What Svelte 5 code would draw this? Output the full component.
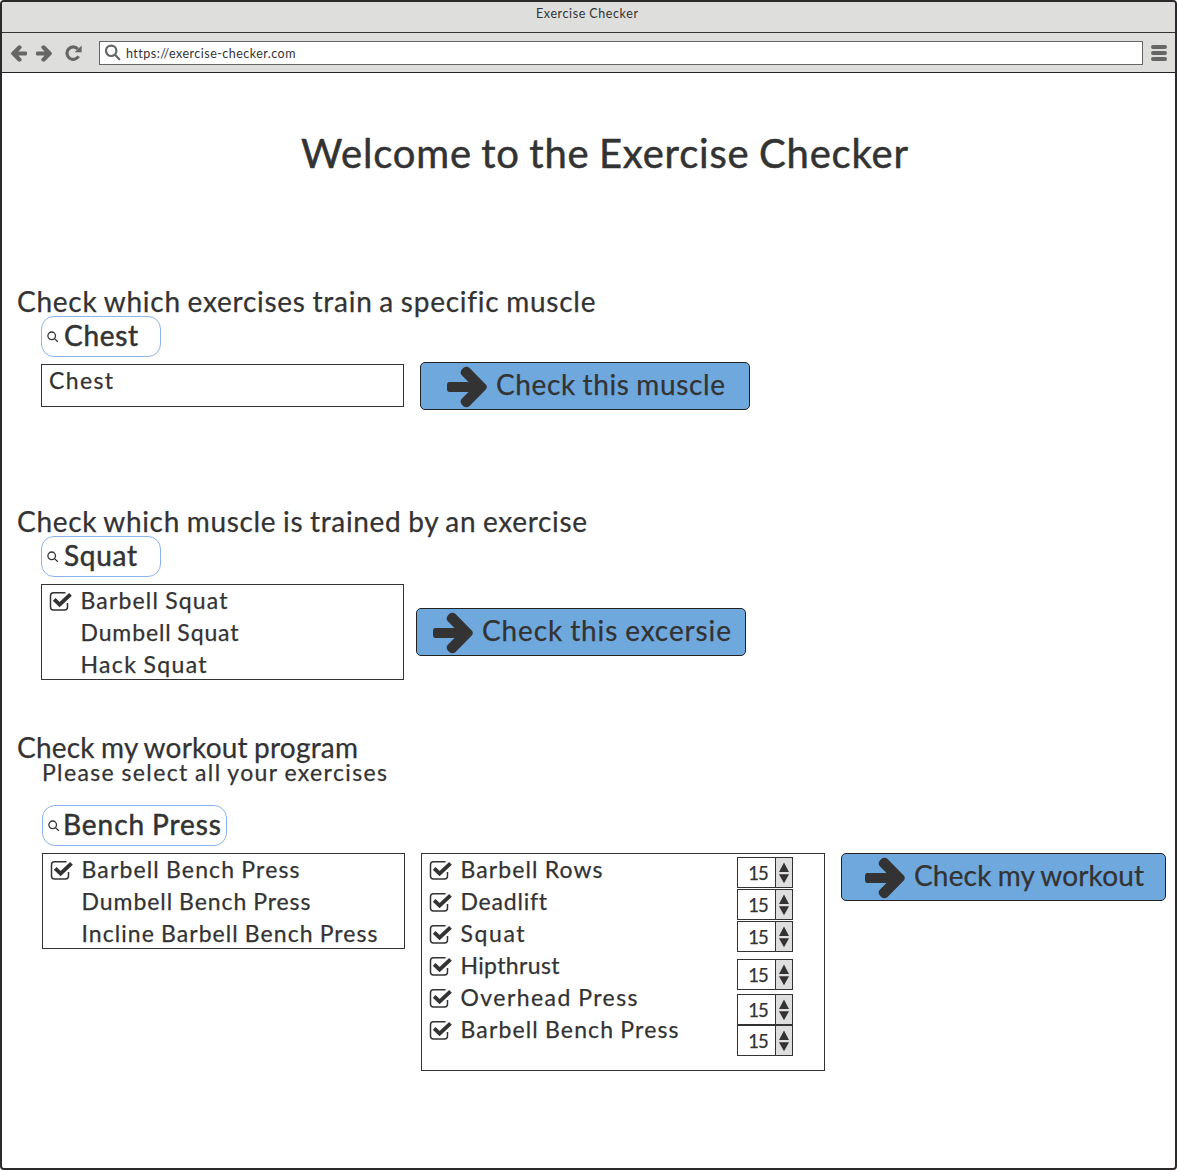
<script>
  const muscles = [{ name: 'Chest', width: 64 }];
  const squats = [
    { name: 'Barbell Squat', width: 147, checked: true },
    { name: 'Dumbell Squat', width: 158 },
    { name: 'Hack Squat', width: 126 }
  ];
  const presses = [
    { name: 'Barbell Bench Press', width: 218, checked: true },
    { name: 'Dumbell Bench Press', width: 229 },
    { name: 'Incline Barbell Bench Press', width: 296 }
  ];
  const workout = [
    { name: 'Barbell Rows', width: 142, checked: true },
    { name: 'Deadlift', width: 86, checked: true },
    { name: 'Squat', width: 64, checked: true },
    { name: 'Hipthrust', width: 99, checked: true },
    { name: 'Overhead Press', width: 177, checked: true },
    { name: 'Barbell Bench Press', width: 218, checked: true }
  ];
  const reps = [15, 15, 15, 15, 15, 15];

  // Spreads the letters of a label so that it spans the given width.
  function fit(node, width) {
    const gaps = node.textContent.length - 1;
    const natural = node.getBoundingClientRect().width;
    node.style.letterSpacing = `${(width - natural) / gaps}px`;
  }
</script>

{#snippet label(text, width)}<span class="label" use:fit={width}>{text}</span>{/snippet}

{#snippet pill(text, width)}
  <div class="pill">
    <svg class="lens" viewBox="0 0 12 12"><circle cx="4.7" cy="4.8" r="3.8" /><path d="M7.5 7.6 10.8 10.8" /></svg>
    {@render label(text, width)}
  </div>
{/snippet}

{#snippet rows(items, indented)}
  {#each items as item}
    <div class="row">
      {#if indented}
        <span class="tick">
          {#if item.checked}
            <svg viewBox="0 0 24 24">
              <path class="frame" d="M16.5 2.8H4.5Q1.5 2.8 1.5 5.8V17Q1.5 20 4.5 20H15.5Q18.5 20 18.5 17V13" />
              <path class="mark" d="M5.2 9.4 10.6 14.6 21.5 4.4" />
            </svg>
          {/if}
        </span>
      {/if}
      {@render label(item.name, item.width)}
    </div>
  {/each}
{/snippet}

{#snippet action(text, width, kind)}
  <button class="action {kind}">
    <svg class="arrow" viewBox="0 0 40 42">
      <path d="M2.5 16H21.5L14.8 9.2Q12.5 6.5 14.8 3.6L16.5 1.8Q19.5-.5 22.3 1.8L39 18.8Q40.6 21 39 23.2L22.3 40.2Q19.5 42.5 16.5 40.2L14.8 38.4Q12.5 35.5 14.8 32.8L21.5 26H2.5Q0 26 0 23V19Q0 16 2.5 16Z" />
    </svg>
    {@render label(text, width)}
  </button>
{/snippet}

<div class="window">
  <header class="titlebar">{@render label('Exercise Checker', 102)}</header>
  <nav class="toolbar">
    <svg class="nav back" viewBox="0 0 40 42"><path d="M3 16H21.5L14 8Q12 5.5 14.3 3L16 1.5Q19.5-.5 22.3 1.8L39 18.8Q40.6 21 39 23.2L22.3 40.2Q19.5 42.5 16 40.5L14.3 39Q12 36.5 14 34L21.5 26H3Q0 26 0 23V19Q0 16 3 16Z" /></svg>
    <svg class="nav forward" viewBox="0 0 40 42"><path d="M3 16H21.5L14 8Q12 5.5 14.3 3L16 1.5Q19.5-.5 22.3 1.8L39 18.8Q40.6 21 39 23.2L22.3 40.2Q19.5 42.5 16 40.5L14.3 39Q12 36.5 14 34L21.5 26H3Q0 26 0 23V19Q0 16 3 16Z" /></svg>
    <svg class="nav reload" viewBox="0 0 17 16"><path class="arc" d="M12.8 4A6.2 6.2 0 1 0 13.6 11.2" /><path d="M16.6.6V7.2H9.6Z" /></svg>
    <div class="address">
      <svg viewBox="0 0 17 17"><circle cx="6.2" cy="6.8" r="5.2" /><path d="M10.3 11 14.3 15.2" /></svg>
      {@render label('https://exercise-checker.com', 169)}
    </div>
    <svg class="menu" viewBox="0 0 16 16"><path d="M2 2H14M2 8H14M2 14H14" /></svg>
  </nav>

  <main>
    <h1>{@render label('Welcome to the Exercise Checker', 607)}</h1>

    <section class="by-muscle">
      <h2>{@render label('Check which exercises train a specific muscle', 578)}</h2>
      <div class="body">
        {@render pill('Chest', 74)}
        <div class="columns">
          <div class="list short">{@render rows(muscles, false)}</div>
          {@render action('Check this muscle', 229, 'muscle')}
        </div>
      </div>
    </section>

    <section class="by-exercise">
      <h2>{@render label('Check which muscle is trained by an exercise', 570)}</h2>
      <div class="body">
        {@render pill('Squat', 73)}
        <div class="columns">
          <div class="list">{@render rows(squats, true)}</div>
          {@render action('Check this excersie', 249, 'exercise')}
        </div>
      </div>
    </section>

    <section class="by-program">
      <h2>{@render label('Check my workout program', 341)}</h2>
      <div class="body">
        <p>{@render label('Please select all your exercises', 345)}</p>
        {@render pill('Bench Press', 158)}
        <div class="columns">
          <div class="list">{@render rows(presses, true)}</div>
          <div class="list program">
            <div>{@render rows(workout, true)}</div>
            <div class="steppers">
              {#each reps as count}
                <div class="stepper">
                  <span class="count">{count}</span>
                  <svg viewBox="0 0 16 29"><path d="M8 4.6 13 14H3ZM8 25.2 13 16.2H3Z" /></svg>
                </div>
              {/each}
            </div>
          </div>
          {@render action('Check my workout', 230, 'workout')}
        </div>
      </div>
    </section>
  </main>
</div>

<style>
  :global(body) { background: #fff; }
  .window {
    box-sizing: border-box;
    width: 1177px;
    height: 1170px;
    overflow: hidden;
    border: 2px solid #2b292a;
    border-radius: 4px;
    background: #fff;
    color: #333;
    font-family: Lato, "Open Sans", sans-serif;
  }
  h1, h2, p { margin: 0; font-weight: 400; }
  svg { display: block; flex: none; fill: #333; }
  .label { display: inline-block; flex: none; white-space: pre; word-spacing: -0.04em; }

  .titlebar {
    box-sizing: border-box;
    height: 31px;
    padding-left: 534px;
    border-bottom: 1px solid #333;
    background: #dededc;
    font-size: 12.5px;
    line-height: 24px;
  }
  .toolbar {
    box-sizing: border-box;
    display: flex;
    align-items: center;
    height: 40px;
    padding: 0 8px 0 9px;
    border-bottom: 1px solid #222;
    background: #dededc;
  }
  .toolbar svg { fill: #666; }
  .nav { width: 16px; height: 17px; margin-top: 1px; }
  .back { transform: scaleX(-1); }
  .forward { margin-left: 9px; }
  .reload { width: 17px; height: 16px; margin-left: 13px; }
  .reload .arc { fill: none; stroke: #666; stroke-width: 3.2; }
  .address {
    box-sizing: border-box;
    display: flex;
    align-items: center;
    width: 1044px;
    height: 24px;
    margin-left: 17px;
    padding-left: 5px;
    border: 1px solid #666;
    background: #fff;
    font-size: 12.5px;
  }
  .address .label { padding-top: 2px; }
  .address svg { width: 17px; height: 17px; margin-right: 4px; stroke: #666; stroke-width: 2.2; stroke-linecap: round; }
  .toolbar .address svg { fill: none; }
  .menu { width: 16px; height: 16px; margin-left: 8px; }
  .menu path { stroke: #666; stroke-width: 4; stroke-linecap: round; }

  main { padding-left: 15px; -webkit-text-stroke: 0.25px #333; }
  h1 {
    height: 40px;
    padding: 60px 0 0 284px;
    font-size: 40px;
    line-height: 40px;
    -webkit-text-stroke: 0.5px #333;
  }
  h2 { height: 30px; font-size: 28px; line-height: 32px; }
  .by-muscle { margin-top: 112px; }
  .by-exercise { margin-top: 95px; }
  .by-program { margin-top: 51px; }
  .body { padding: 1px 0 0 24px; }
  .by-program .body { padding: 0 0 0 25px; }
  p { height: 44px; font-size: 23px; line-height: 23px; }

  .pill {
    box-sizing: border-box;
    display: flex;
    width: 120px;
    height: 41px;
    padding-left: 5px;
    border: 1px solid #8ab4ee;
    border-radius: 13px;
    font-size: 28px;
    line-height: 37px;
    -webkit-text-stroke: 0.5px #333;
  }
  .by-program .pill { width: 185px; }
  .lens { width: 12px; height: 12px; margin: 14px 5px 0 0; }
  .by-program .lens { margin-right: 3px; }
  .lens circle, .lens path { fill: none; stroke: #333; stroke-width: 1.3; }

  .columns { display: flex; align-items: flex-start; margin-top: 7px; }
  .list {
    flex: none;
    width: 363px;
    box-shadow: inset 0 0 0 1px #333;
    font-size: 23px;
  }
  .short { height: 43px; }
  .row { display: flex; height: 32px; padding-left: 8px; line-height: 32px; }
  .tick { width: 31.5px; }
  .tick svg { width: 24px; height: 24px; margin-top: 6px; }
  .tick .frame { fill: none; stroke: #333; stroke-width: 1.5; }
  .tick .mark { fill: none; stroke: #333; stroke-width: 4; }

  .program { display: flex; justify-content: space-between; width: 404px; height: 218px; margin-left: 16px; }
  .steppers { padding: 4px 32px 0 0; }
  .stepper {
    box-sizing: border-box;
    display: flex;
    width: 56px;
    height: 31px;
    margin-bottom: 1px;
    border: 1px solid #333;
    background: #fff;
  }
  .stepper:nth-child(3) { margin-bottom: 7px; }
  .stepper:nth-child(4) { margin-bottom: 4px; }
  .stepper:nth-child(5) { margin-bottom: 0; }
  .count { width: 30px; padding-right: 7px; font-size: 18.5px; line-height: 30px; text-align: right; letter-spacing: -0.8px; }
  .stepper svg { width: 16px; height: 29px; border-left: 1px solid #333; background: #dedede; }

  .action {
    box-sizing: border-box;
    display: flex;
    flex: none;
    width: 330px;
    height: 48px;
    padding: 0;
    border: 1px solid #222;
    border-radius: 5px;
    background: #6fa8dc;
    color: #333;
    font-family: inherit;
    font-size: 28px;
    line-height: 42px;
    text-align: left;
  }
  .arrow { width: 40px; height: 42px; margin: 3px 9px 0 0; }
  .muscle { margin: -2px 0 0 16px; padding-left: 26px; }
  .exercise { margin: 24px 0 0 12px; padding-left: 16px; }
  .workout { width: 325px; margin-left: 16px; padding-left: 23px; }
</style>
